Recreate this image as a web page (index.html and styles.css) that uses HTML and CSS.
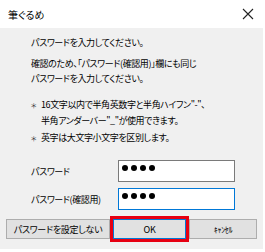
FILE: index.html
```html
<!DOCTYPE html>
<html lang="ja">
<head>
  <meta charset="UTF-8">
  <title>筆ぐるめ</title>
  <link rel="stylesheet" href="styles.css">
</head>
<body>
  <div class="window">
    <div class="titlebar">
      <span class="title">筆ぐるめ</span>
      <span class="close">
        <svg width="12" height="12" viewBox="0 0 12 12"><path d="M1 1 L11 11 M11 1 L1 11" stroke="#222" stroke-width="1.1" fill="none"/></svg>
      </span>
    </div>

    <div class="content">
      <p class="msg">パスワードを入力してください。</p>
      <p class="msg two">確認のため、「パスワード(確認用)」欄にも同じ<br>パスワードを入力してください。</p>

      <ul class="notes">
        <li><span class="mark">＊</span><span>16文字以内で半角英数字と半角ハイフン"-"、<br>半角アンダーバー"_"が使用できます。</span></li>
        <li><span class="mark">＊</span><span>英字は大文字小文字を区別します。</span></li>
      </ul>

      <div class="fields">
        <div class="field">
          <label>パスワード</label>
          <div class="input"><i></i><i></i><i></i><i></i></div>
        </div>
        <div class="field">
          <label>パスワード(確認用)</label>
          <div class="input focus"><i></i><i></i><i></i><i></i></div>
        </div>
      </div>

      <div class="buttons">
        <button class="btn wide">パスワードを設定しない</button>
        <span class="highlight"><button class="btn ok">OK</button></span>
        <button class="btn cancel">ｷｬﾝｾﾙ</button>
      </div>
    </div>
  </div>
</body>
</html>
```

FILE: styles.css
```css
body {
  margin: 0;
  font-family: "Noto Sans CJK JP", "DejaVu Sans", sans-serif;
  font-size: 9px;
  letter-spacing: -0.4px;
  font-feature-settings: "palt";
  color: #000;
  background: #fff;
}

.window {
  width: 265px;
  height: 252px;
  display: flex;
  flex-direction: column;
  overflow: hidden;
}

.titlebar {
  height: 28px;
  flex: none;
  background: #fff;
  display: flex;
  align-items: center;
  justify-content: space-between;
  padding: 0 11px 0 8px;
}

.title {
  font-size: 10px;
  letter-spacing: 0;
}

.close {
  display: flex;
  margin-top: -1px;
}

.content {
  flex: 1;
  background: #f0f0f0;
  padding: 7px 0 0 0;
  margin: 0 2px 3px 0;
}

.msg {
  margin: 0 0 0 31px;
  line-height: 15px;
}

.msg.two {
  margin-top: 6px;
}

.notes {
  list-style: none;
  margin: 11px 0 0 31px;
  padding: 0;
  line-height: 16px;
}

.notes li {
  display: flex;
  margin-bottom: 1px;
}

.mark {
  width: 10px;
  font-size: 7px;
  color: #333;
}

.fields {
  margin-top: 14px;
}

.field {
  display: flex;
  align-items: center;
  height: 22px;
  margin-bottom: 6px;
}

.field label {
  width: 118px;
  padding-left: 31px;
  box-sizing: border-box;
  flex: none;
  white-space: nowrap;
}

.input {
  width: 117px;
  height: 22px;
  box-sizing: border-box;
  background: #fff;
  border: 1px solid #7a7a7a;
  display: flex;
  gap: 3px;
  padding: 4px 0 0 3px;
}

.input i {
  width: 6px;
  height: 6px;
  border-radius: 50%;
  background: #000;
}

.input.focus {
  border-color: #0078d7;
}

.buttons {
  display: flex;
  align-items: center;
  margin-top: 4px;
  padding-left: 6px;
}

.btn {
  font-family: inherit;
  font-size: 9px;
  letter-spacing: -0.3px;
  font-feature-settings: "palt";
  height: 20px;
  background: #e1e1e1;
  border: 1px solid #adadad;
  padding: 0;
  color: #000;
}

.wide {
  width: 104px;
}

.highlight {
  display: flex;
  border: 3px solid #e60012;
}

.ok {
  width: 73px;
  border-color: #0078d7;
}

.cancel {
  width: 68px;
  font-size: 8px;
}
```
